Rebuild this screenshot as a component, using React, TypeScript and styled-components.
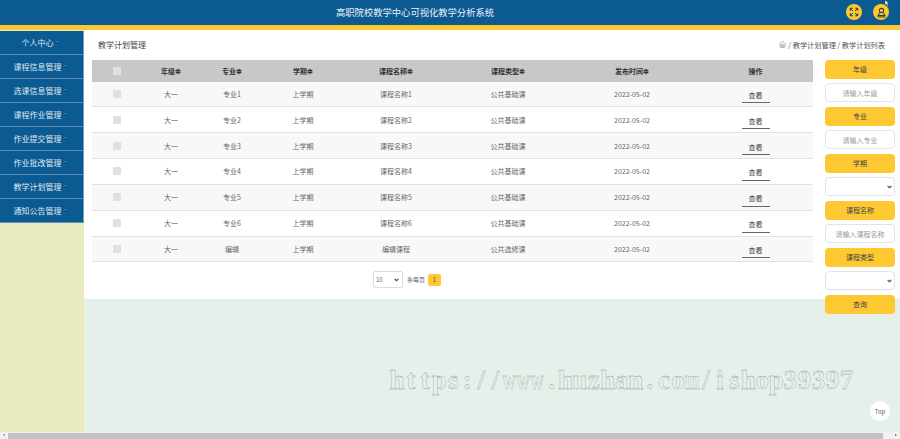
import React from "react";
import styled, { createGlobalStyle } from "styled-components";
import { Expand, House } from "lucide-react";

const Global = createGlobalStyle`
  html, body { margin: 0; padding: 0; overflow: hidden; }
  body { font-family: "Noto Sans CJK SC", "Noto Sans", sans-serif; }
  * { box-sizing: border-box; }
`;

const Page = styled.div`
  position: relative;
  width: 900px;
  height: 439px;
  display: flex;
  flex-direction: column;
  overflow: hidden;
  background: #e6f0ea;
`;

const Header = styled.header`
  height: 30px;
  flex: none;
  background: #0c5a92;
  border-bottom: 5px solid #fdc82f;
  display: flex;
  align-items: center;
  justify-content: flex-end;
  padding: 0 11px 1px 0;
  gap: 11px;
  position: relative;
`;

const AppTitle = styled.h1`
  position: absolute;
  left: 336px;
  top: 5px;
  margin: 0;
  font-size: 9.3px;
  line-height: 15px;
  font-weight: 400;
  color: #eef3f8;
  white-space: nowrap;
`;

const RoundIcon = styled.span`
  width: 16px;
  height: 16px;
  border-radius: 50%;
  background: #fdc82f;
  color: #1c3f55;
  display: flex;
  align-items: center;
  justify-content: center;
`;

const Body = styled.div`
  flex: 1;
  display: flex;
  min-height: 0;
`;

const Sidebar = styled.nav`
  width: 84px;
  flex: none;
  background: #e9ebbf;
  padding-top: 1px;
`;

const MenuItem = styled.div`
  height: 24px;
  background: #0c5a92;
  border-bottom: 1px solid #5f8fb4;
  border-right: 1px solid #6ea0c6;
  color: #dfe9f1;
  font-size: 8px;
  display: flex;
  align-items: center;
  justify-content: center;
  gap: 2px;
  padding-right: 3px;
  &::after {
    content: "";
    width: 3px;
    height: 1px;
    background: #3f7aa6;
    margin-bottom: 3px;
  }
`;

const Content = styled.main`
  flex: 1;
  min-width: 0;
`;

const Panel = styled.section`
  height: 269px;
  background: #fff;
  padding: 0 5px 0 8px;
`;

const TopLine = styled.div`
  height: 30px;
  display: flex;
  align-items: center;
  justify-content: space-between;
  padding: 0 10px 1px 6px;
  font-size: 8px;
  color: #444;
`;

const Crumbs = styled.div`
  display: flex;
  align-items: center;
  gap: 2px;
  font-size: 7.2px;
  color: #555;
`;

const Columns = styled.div`
  display: flex;
  gap: 12px;
`;

const TableArea = styled.div`
  width: 721px;
  flex: none;
`;

const Row = styled.div<{ $kind: "head" | "odd" | "even" }>`
  display: grid;
  grid-template-columns: 50px 58px 64px 78px 108px 116px 132px 115px;
  align-items: center;
  justify-items: center;
  height: ${(p) => (p.$kind === "head" ? "21.5px" : "25.85px")};
  background: ${(p) =>
    p.$kind === "head" ? "#c8c8c8" : p.$kind === "odd" ? "#f8f8f8" : "#ffffff"};
  border-bottom: ${(p) => (p.$kind === "head" ? "none" : "1.5px solid #e2e2e2")};
  font-size: 7px;
  color: ${(p) => (p.$kind === "head" ? "#333" : "#666")};
  font-weight: ${(p) => (p.$kind === "head" ? 700 : 400)};
`;

const Check = styled.span`
  width: 8px;
  height: 8px;
  background: #dde0e6;
  border-radius: 1px;
`;

const ViewLink = styled.span`
  width: 28px;
  height: 16px;
  margin-top: 3px;
  border-bottom: 1px solid #666;
  font-size: 7px;
  color: #444;
  display: flex;
  align-items: center;
  justify-content: center;
`;

const Pager = styled.div`
  display: flex;
  align-items: center;
  padding: 9px 0 0 281px;
  font-size: 6px;
  color: #666;
`;

const PageSize = styled.div`
  width: 30px;
  height: 17px;
  border: 1px solid #ddd;
  border-radius: 2px;
  display: flex;
  align-items: center;
  justify-content: space-between;
  padding: 0 3px 0 2px;
  margin-right: 4px;
`;

const PageNo = styled.span`
  width: 13px;
  height: 12px;
  margin-left: 3px;
  border-radius: 2px;
  background: #fdc82f;
  color: #555;
  display: flex;
  align-items: center;
  justify-content: center;
`;

const Filters = styled.aside`
  width: 70px;
  flex: none;
  display: flex;
  flex-direction: column;
  gap: 4.6px;
`;

const Tag = styled.div`
  height: 18.9px;
  flex: none;
  border-radius: 4px;
  background: #fdc832;
  color: #444;
  font-size: 7px;
  display: flex;
  align-items: center;
  justify-content: center;
`;

const Field = styled.div`
  height: 18.9px;
  flex: none;
  border-radius: 4px;
  background: #fff;
  border: 1px solid #e3e3e3;
  color: #999;
  font-size: 7px;
  display: flex;
  align-items: center;
  justify-content: center;
`;

const SelectField = styled(Field)`
  justify-content: flex-end;
  padding-right: 2px;
`;

const Chevron = () => (
  <svg width="5" height="4" viewBox="0 0 5 4" aria-hidden="true">
    <path d="M.6.8l1.9 1.9L4.4.8" fill="none" stroke="#444" strokeWidth="1.1" />
  </svg>
);

const Watermark = styled.div`
  position: absolute;
  left: 390px;
  top: 361px;
  display: flex;
  font-family: "Liberation Serif", serif;
  font-weight: 700;
  font-size: 27px;
  line-height: 38px;
  color: transparent;
  -webkit-text-stroke: 0.32px #8a8f8c;
  opacity: 0.99;
  white-space: nowrap;
`;

const WatermarkChar = styled.span<{ $narrow: boolean }>`
  width: 14.05px;
  display: flex;
  justify-content: center;
  transform: ${(p) => (p.$narrow ? "scaleX(0.68)" : "none")};
`;

const TopButton = styled.div`
  position: absolute;
  left: 870px;
  top: 401px;
  width: 20px;
  height: 20px;
  border-radius: 50%;
  background: #fff;
  color: #666;
  font-size: 6px;
  display: flex;
  align-items: center;
  justify-content: center;
`;

const Pointer = styled.svg`
  position: absolute;
  left: 884px;
  top: 0;
`;

const ScrollBar = styled.div`
  height: 7px;
  flex: none;
  background: #f1f1f1;
  display: flex;
  align-items: center;
  padding: 0 6px 0 8px;
  justify-content: space-between;
  position: relative;
`;

const Thumb = styled.div`
  width: 875px;
  height: 6px;
  background: #c1c1c1;
`;

const Arrow = styled.span<{ $dir: "left" | "right" }>`
  position: absolute;
  top: 2px;
  ${(p) => (p.$dir === "left" ? "left: 3px;" : "right: 3px;")}
  border-top: 1.5px solid transparent;
  border-bottom: 1.5px solid transparent;
  ${(p) =>
    p.$dir === "left"
      ? "border-right: 2px solid #777;"
      : "border-left: 2px solid #555;"}
`;

const menu = ["个人中心", "课程信息管理", "选课信息管理", "课程作业管理", "作业提交管理", "作业批改管理", "教学计划管理", "通知公告管理"];
const heads = ["年级≑", "专业≑", "学期≑", "课程名称≑", "课程类型≑", "发布时间≑"];
const rows = [
  ["大一", "专业1", "上学期", "课程名称1", "公共基础课"],
  ["大一", "专业2", "上学期", "课程名称2", "公共基础课"],
  ["大一", "专业3", "上学期", "课程名称3", "公共基础课"],
  ["大一", "专业4", "上学期", "课程名称4", "公共基础课"],
  ["大一", "专业5", "上学期", "课程名称5", "公共基础课"],
  ["大一", "专业6", "上学期", "课程名称6", "公共基础课"],
  ["大一", "编辑", "上学期", "编辑课程", "公共选修课"],
];
const mark = "https://www.huzhan.com/ishop39397";

const UserBadge = () => (
  <svg width="11" height="11" viewBox="0 0 12 12" fill="none" stroke="currentColor" strokeWidth="1.1" aria-hidden="true">
    <circle cx="6" cy="3.8" r="2.3" />
    <path d="M4.6 6.4C3 7 2.4 8 2.2 9.4h7.6C9.600 8 9 7 7.400 6.400" />
    <path d="M1.600 10.800h8.800" />
  </svg>
);

export default function App() {
  return (
    <Page>
      <Global />
      <Header>
        <AppTitle>高职院校教学中心可视化教学分析系统</AppTitle>
        <RoundIcon><Expand size={10} strokeWidth={2.4} /></RoundIcon>
        <RoundIcon><UserBadge /></RoundIcon>
      </Header>
      <Body>
        <Sidebar>
          {menu.map((m) => <MenuItem key={m}>{m}</MenuItem>)}
        </Sidebar>
        <Content>
          <Panel>
            <TopLine>
              <span>教学计划管理</span>
              <Crumbs>
                <House size={7} strokeWidth={1.6} />
                <span>/ 教学计划管理 / 教学计划列表</span>
              </Crumbs>
            </TopLine>
            <Columns>
              <TableArea>
                <Row $kind="head">
                  <Check />
                  {heads.map((h) => <span key={h}>{h}</span>)}
                  <span>操作</span>
                </Row>
                {rows.map((r, i) => (
                  <Row key={i} $kind={i % 2 ? "even" : "odd"}>
                    <Check />
                    {r.map((c, j) => <span key={j}>{c}</span>)}
                    <span>2022-05-02</span>
                    <ViewLink>查看</ViewLink>
                  </Row>
                ))}
                <Pager>
                  <PageSize><span>10</span><Chevron /></PageSize>
                  <span>条每页</span>
                  <PageNo>1</PageNo>
                </Pager>
              </TableArea>
              <Filters>
                <Tag>年级</Tag>
                <Field>请输入年级</Field>
                <Tag>专业</Tag>
                <Field>请输入专业</Field>
                <Tag>学期</Tag>
                <SelectField><Chevron /></SelectField>
                <Tag>课程名称</Tag>
                <Field>请输入课程名称</Field>
                <Tag>课程类型</Tag>
                <SelectField><Chevron /></SelectField>
                <Tag>查询</Tag>
              </Filters>
            </Columns>
          </Panel>
        </Content>
      </Body>
      <ScrollBar>
        <Arrow $dir="left" />
        <Thumb />
        <Arrow $dir="right" />
      </ScrollBar>
      <Watermark aria-label={mark}>
        {mark.split("").map((c, i) => (
          <WatermarkChar key={i} $narrow={c === "w" || c === "m"}>{c}</WatermarkChar>
        ))}
      </Watermark>
      <TopButton>Top</TopButton>
      <Pointer width="6" height="7" viewBox="0 0 6 7" aria-hidden="true">
        <path d="M1 0v5l1.3-1 1 2 1-.5-1-2H5z" fill="#fff" stroke="#222" strokeWidth=".4" />
      </Pointer>
    </Page>
  );
}
